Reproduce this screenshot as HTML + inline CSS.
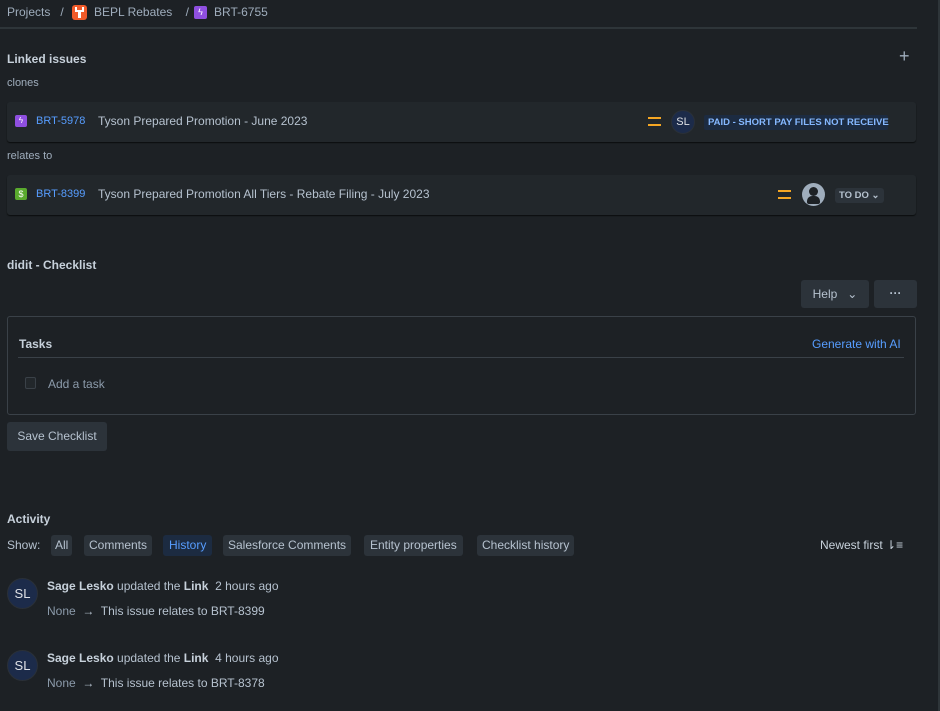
<!DOCTYPE html>
<html><head><style>
*{box-sizing:border-box;margin:0;padding:0}
body{width:940px;height:711px;background:#1d2125;color:#b6c2cf;font-family:"Liberation Sans",sans-serif;font-size:12px;position:relative;overflow:hidden}
.a{position:absolute;white-space:nowrap}
.card{position:absolute;left:7px;width:909px;height:40px;background:#22272b;border-radius:3px;box-shadow:0 1px 1px #0b0d0e}
.ic{position:absolute;width:12px;height:12px;border-radius:2px}
.key{color:#579dff;font-size:11px}
.eq{position:absolute;width:13px;height:9px;border-top:2.5px solid #f5a623;border-bottom:2.5px solid #f5a623}
.btn{position:absolute;background:#2c333a;border-radius:3px;color:#b6c2cf;font-size:12px;text-align:center}
.chip{position:absolute;top:535px;height:21px;background:#2c333a;border-radius:3px;color:#b6c2cf;font-size:12px;line-height:21px;padding:0 5px}
.av{position:absolute;width:31px;height:31px;border-radius:50%;background:#1c2b4a;border:1px solid #2a3038;color:#dfe1e6;font-size:13px;text-align:center;line-height:29px}
</style></head><body>
<div class="a" style="left:7px;top:5px;font-size:12px;color:#9fadbc">Projects&nbsp;&nbsp;&nbsp;/</div>
<div class="ic" style="left:72px;top:5px;width:15px;height:15px;background:#f15b2a;border-radius:3px"><div style="position:absolute;left:6px;top:6px;width:3px;height:7px;background:#fff"></div><div style="position:absolute;left:3px;top:2px;width:9px;height:5px;border:2px solid #fff;border-top:none"></div></div>
<div class="a" style="left:94px;top:5px;font-size:12px;color:#9fadbc">BEPL Rebates&nbsp;&nbsp;&nbsp;&nbsp;/</div>
<div class="ic" style="left:194px;top:6px;width:13px;height:13px;background:#8f4fe0;color:#fff;font-size:9px;text-align:center;line-height:13px">ϟ</div>
<div class="a" style="left:214px;top:5px;font-size:12px;color:#9fadbc">BRT-6755</div>
<div class="a" style="left:0;top:27px;width:917px;height:2px;background:#2e3539"></div>
<div class="a" style="left:938px;top:0;width:2px;height:711px;background:#2e3539"></div>

<div class="a" style="left:7px;top:52px;font-weight:bold;font-size:12px;color:#c7d1db">Linked issues</div>
<div class="a" style="left:899px;top:46px;font-size:18px;color:#9fadbc">+</div>
<div class="a" style="left:7px;top:77px;font-size:11px;color:#9fadbc">clones</div>
<div class="card" style="top:102px"></div>
<div class="ic" style="left:15px;top:115px;background:#8f4fe0;color:#fff;font-size:8px;text-align:center;line-height:12px">ϟ</div>
<div class="a key" style="left:36px;top:115px">BRT-5978</div>
<div class="a" style="left:98px;top:114px">Tyson Prepared Promotion - June 2023</div>
<div class="eq" style="left:648px;top:117px"></div>
<div class="av" style="left:671px;top:110px;width:24px;height:24px;line-height:22px;font-size:11px">SL</div>
<div class="a" style="left:704px;top:115px;height:15px;width:184px;background:#1c2b41;border-radius:2px;color:#85b8ff;font-weight:bold;font-size:9.5px;line-height:15px;padding-left:4px">PAID - SHORT PAY FILES NOT RECEIVE</div>
<div class="a" style="left:7px;top:150px;font-size:11px;color:#9fadbc">relates to</div>
<div class="card" style="top:175px"></div>
<div class="ic" style="left:15px;top:188px;background:#5aaa2e;color:#fff;font-size:9px;text-align:center;line-height:12px">$</div>
<div class="a key" style="left:36px;top:188px">BRT-8399</div>
<div class="a" style="left:98px;top:187px">Tyson Prepared Promotion All Tiers - Rebate Filing - July 2023</div>
<div class="eq" style="left:778px;top:190px"></div>
<div class="a" style="left:802px;top:183px;width:23px;height:23px;border-radius:50%;background:#9fadbc;overflow:hidden"><div style="position:absolute;left:7px;top:4px;width:9px;height:9px;border-radius:50%;background:#1d2125"></div><div style="position:absolute;left:5px;top:13px;width:13px;height:8px;border-radius:5px 5px 2px 2px;background:#1d2125"></div></div>
<div class="a" style="left:835px;top:188px;width:49px;height:15px;background:#2c333a;border-radius:3px;font-size:9.5px;font-weight:bold;color:#b6c2cf;line-height:15px;padding-left:4px">TO DO ⌄</div>

<div class="a" style="left:7px;top:258px;font-weight:bold;font-size:12px;color:#c7d1db">didit - Checklist</div>
<div class="btn" style="left:801px;top:280px;width:68px;height:28px;line-height:28px">Help&nbsp;&nbsp; ⌄</div>
<div class="btn" style="left:874px;top:280px;width:43px;height:28px;line-height:26px;font-weight:bold">···</div>
<div class="a" style="left:7px;top:316px;width:909px;height:99px;border:1px solid #3a4148;border-radius:3px"></div>
<div class="a" style="left:19px;top:337px;font-weight:bold;font-size:12px;color:#c7d1db">Tasks</div>
<div class="a" style="left:812px;top:337px;font-size:12px;color:#579dff">Generate with AI</div>
<div class="a" style="left:18px;top:357px;width:886px;height:1px;background:#3a4148"></div>
<div class="a" style="left:25px;top:377px;width:11px;height:12px;border:1.5px solid #3a4148;border-radius:2px;background:#22272b"></div>
<div class="a" style="left:48px;top:377px;font-size:12px;color:#8c9bab">Add a task</div>
<div class="btn" style="left:7px;top:422px;width:100px;height:29px;line-height:29px">Save Checklist</div>

<div class="a" style="left:7px;top:512px;font-size:12px;color:#c7d1db;font-weight:bold">Activity</div>
<div class="a" style="left:7px;top:538px;font-size:12px">Show:</div>
<div class="chip" style="left:51px;padding:0 4px">All</div>
<div class="chip" style="left:84px">Comments</div>
<div class="chip" style="left:163px;background:#1c2b41;color:#579dff;padding:0 6px">History</div>
<div class="chip" style="left:223px">Salesforce Comments</div>
<div class="chip" style="left:364px;padding:0 6px">Entity properties</div>
<div class="chip" style="left:477px">Checklist history</div>
<div class="a" style="left:820px;top:538px;font-size:12px;color:#c7d1db">Newest first ⇂≡</div>

<div class="av" style="left:7px;top:578px">SL</div>
<div class="a" style="left:47px;top:579px;font-size:12px"><b style="color:#c7d1db">Sage Lesko</b> updated the <b style="color:#c7d1db">Link</b>&nbsp; 2 hours ago</div>
<div class="a" style="left:47px;top:604px;font-size:12px"><span style="color:#8c9bab">None</span> &nbsp;→&nbsp; This issue relates to BRT-8399</div>
<div class="av" style="left:7px;top:650px">SL</div>
<div class="a" style="left:47px;top:651px;font-size:12px"><b style="color:#c7d1db">Sage Lesko</b> updated the <b style="color:#c7d1db">Link</b>&nbsp; 4 hours ago</div>
<div class="a" style="left:47px;top:676px;font-size:12px"><span style="color:#8c9bab">None</span> &nbsp;→&nbsp; This issue relates to BRT-8378</div>
</body></html>
